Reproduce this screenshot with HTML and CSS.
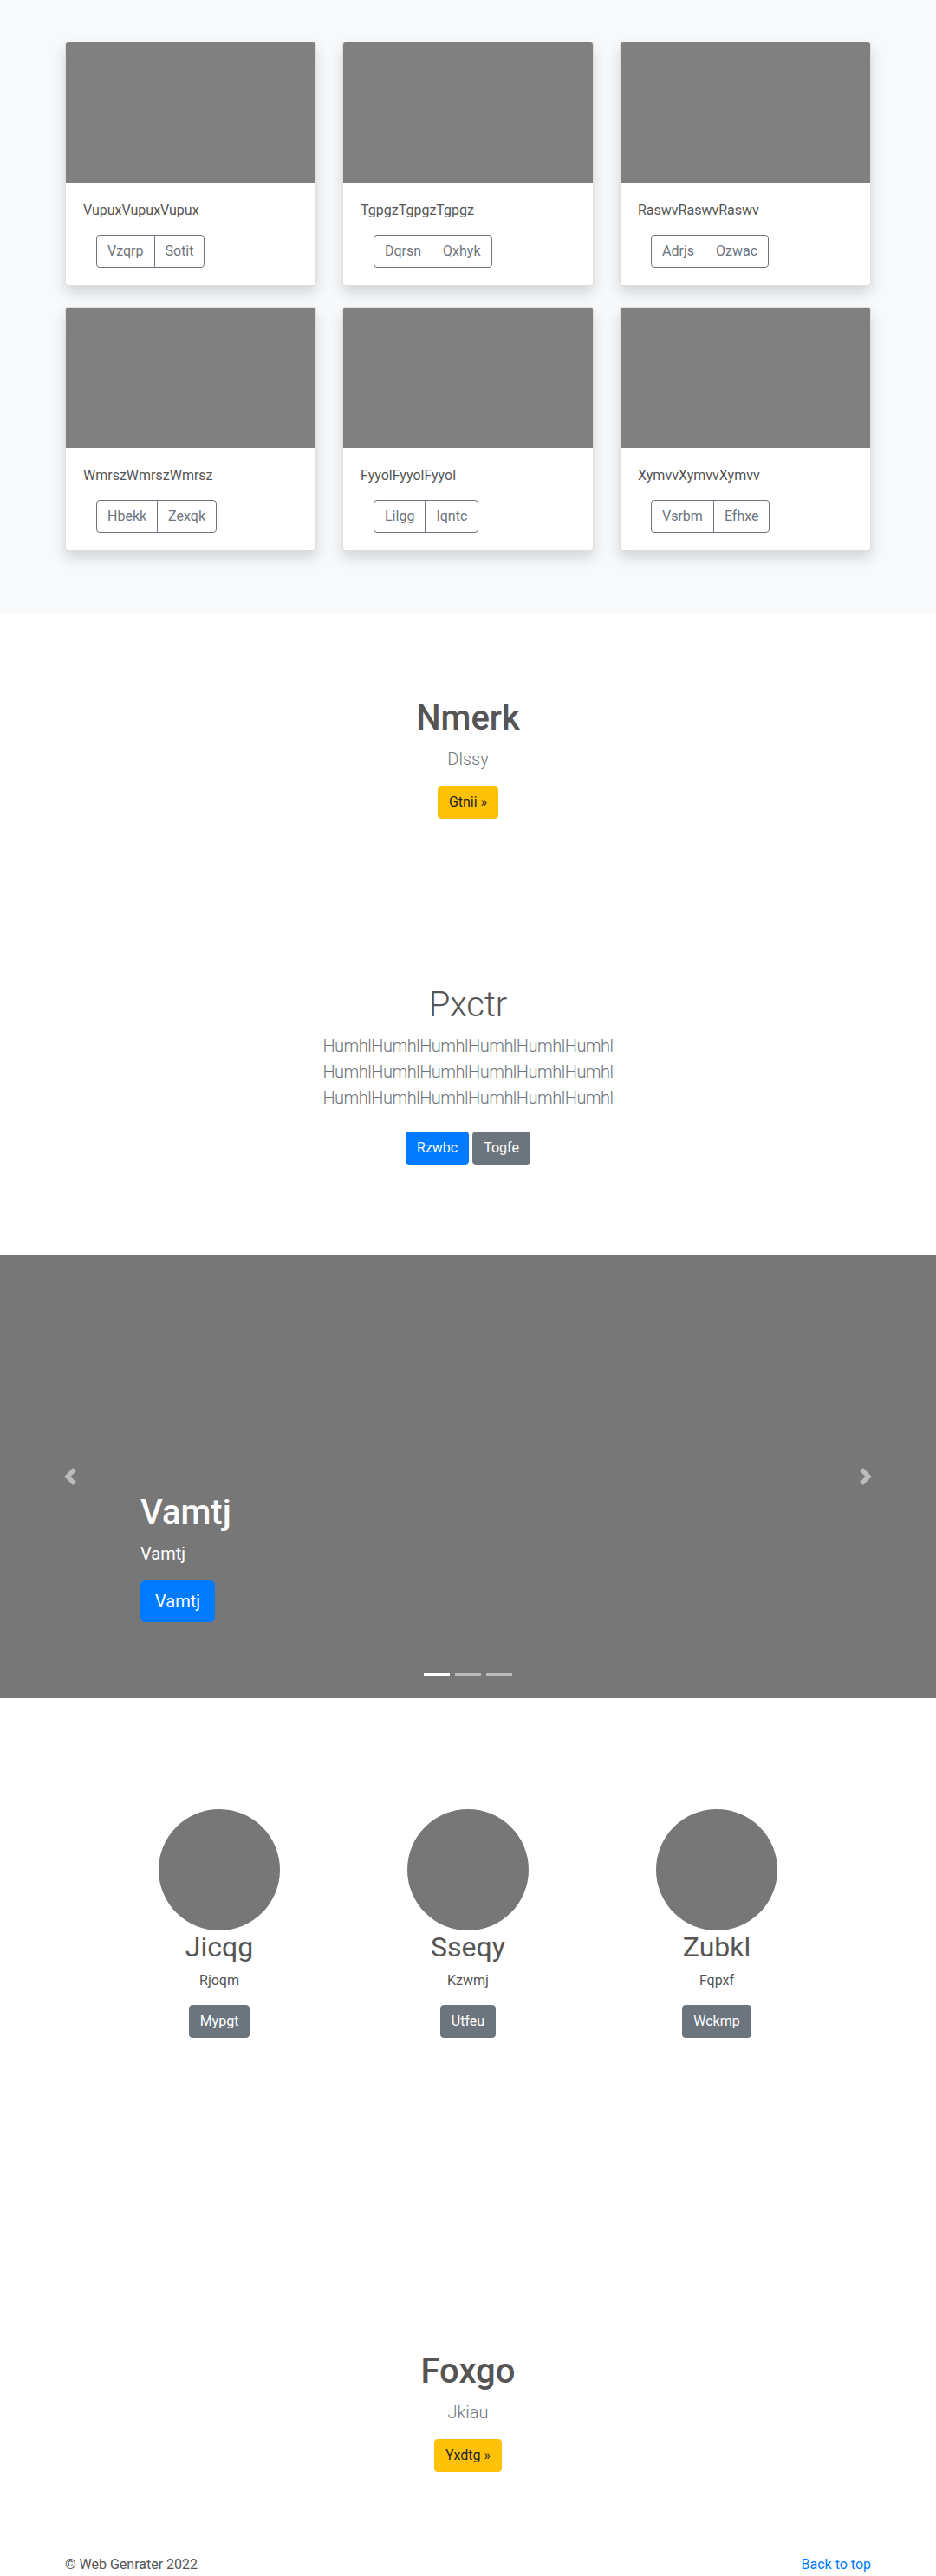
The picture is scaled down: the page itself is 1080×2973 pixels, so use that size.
FILE: index.html
```html
<!DOCTYPE html>
<html lang="en">
<head>
<meta charset="utf-8">
<title>Web Genrater</title>
<link rel="stylesheet" href="styles.css">
</head>
<body>
<section class="album">
  <div class="container">
    <div class="card-grid">
      <div class="card">
        <div class="card-img"></div>
        <div class="card-body">
          <p class="card-text">VupuxVupuxVupux</p>
          <div class="card-actions"><div class="btn-group"><a class="btn btn-outline" href="#">Vzqrp</a><a class="btn btn-outline" href="#">Sotit</a></div></div>
        </div>
      </div>
      <div class="card">
        <div class="card-img"></div>
        <div class="card-body">
          <p class="card-text">TgpgzTgpgzTgpgz</p>
          <div class="card-actions"><div class="btn-group"><a class="btn btn-outline" href="#">Dqrsn</a><a class="btn btn-outline" href="#">Qxhyk</a></div></div>
        </div>
      </div>
      <div class="card">
        <div class="card-img"></div>
        <div class="card-body">
          <p class="card-text">RaswvRaswvRaswv</p>
          <div class="card-actions"><div class="btn-group"><a class="btn btn-outline" href="#">Adrjs</a><a class="btn btn-outline" href="#">Ozwac</a></div></div>
        </div>
      </div>
      <div class="card">
        <div class="card-img"></div>
        <div class="card-body">
          <p class="card-text">WmrszWmrszWmrsz</p>
          <div class="card-actions"><div class="btn-group"><a class="btn btn-outline" href="#">Hbekk</a><a class="btn btn-outline" href="#">Zexqk</a></div></div>
        </div>
      </div>
      <div class="card">
        <div class="card-img"></div>
        <div class="card-body">
          <p class="card-text">FyyolFyyolFyyol</p>
          <div class="card-actions"><div class="btn-group"><a class="btn btn-outline" href="#">Lilgg</a><a class="btn btn-outline" href="#">Iqntc</a></div></div>
        </div>
      </div>
      <div class="card">
        <div class="card-img"></div>
        <div class="card-body">
          <p class="card-text">XymvvXymvvXymvv</p>
          <div class="card-actions"><div class="btn-group"><a class="btn btn-outline" href="#">Vsrbm</a><a class="btn btn-outline" href="#">Efhxe</a></div></div>
        </div>
      </div>
    </div>
  </div>
</section>

<section class="hero hero-top">
  <div class="container">
    <h1 class="hero-title">Nmerk</h1>
    <p class="lead">Dlssy</p>
    <p class="actions"><a class="btn btn-warning" href="#">Gtnii »</a></p>
  </div>
</section>

<section class="jumbotron">
  <div class="container">
    <h1 class="jumbo-title">Pxctr</h1>
    <p class="lead jumbo-lead">HumhlHumhlHumhlHumhlHumhlHumhl HumhlHumhlHumhlHumhlHumhlHumhl HumhlHumhlHumhlHumhlHumhlHumhl</p>
    <p class="actions jumbo-actions"><a class="btn btn-primary" href="#">Rzwbc</a><a class="btn btn-secondary" href="#">Togfe</a></p>
  </div>
</section>

<div class="carousel">
  <ol class="indicators">
    <li class="active"></li>
    <li></li>
    <li></li>
  </ol>
  <a class="control control-prev" href="#">
    <svg width="20" height="20" viewBox="0 0 8 8" fill="#fff"><path d="M5.25 0l-4 4 4 4 1.5-1.5L4.25 4l2.5-2.5L5.25 0z"/></svg>
  </a>
  <a class="control control-next" href="#">
    <svg width="20" height="20" viewBox="0 0 8 8" fill="#fff"><path d="M2.75 0l-1.5 1.5L3.75 4l-2.5 2.5L2.75 8l4-4-4-4z"/></svg>
  </a>
  <div class="caption">
    <h1 class="caption-title">Vamtj</h1>
    <p class="caption-lead">Vamtj</p>
    <p class="caption-actions"><a class="btn btn-lg btn-primary" href="#">Vamtj</a></p>
  </div>
</div>

<section class="marketing">
  <div class="marketing-grid">
    <div class="feature">
      <div class="circle"></div>
      <h2 class="feature-title">Jicqg</h2>
      <p class="feature-text">Rjoqm</p>
      <p class="actions"><a class="btn btn-secondary" href="#">Mypgt</a></p>
    </div>
    <div class="feature">
      <div class="circle"></div>
      <h2 class="feature-title">Sseqy</h2>
      <p class="feature-text">Kzwmj</p>
      <p class="actions"><a class="btn btn-secondary" href="#">Utfeu</a></p>
    </div>
    <div class="feature">
      <div class="circle"></div>
      <h2 class="feature-title">Zubkl</h2>
      <p class="feature-text">Fqpxf</p>
      <p class="actions"><a class="btn btn-secondary" href="#">Wckmp</a></p>
    </div>
  </div>
</section>

<hr class="divider">

<section class="hero hero-bottom">
  <div class="container">
    <h1 class="hero-title">Foxgo</h1>
    <p class="lead">Jkiau</p>
    <p class="actions"><a class="btn btn-warning" href="#">Yxdtg »</a></p>
  </div>
</section>

<footer class="container footer">
  <p>© Web Genrater 2022</p>
  <p><a class="link" href="#">Back to top</a></p>
</footer>
</body>
</html>
```

FILE: styles.css
```css
* { box-sizing: border-box; }

body {
  margin: 0;
  font-family: Roboto, "Segoe UI", "Liberation Sans", sans-serif;
  font-size: 16px;
  line-height: 1.5;
  color: #555;
  background: #fff;
}

h1, h2, p { margin: 0; }

.container {
  width: 960px;
  margin: 0 auto;
  padding: 0 15px;
}

/* Buttons */
.btn {
  display: inline-block;
  font-size: 16px;
  line-height: 24px;
  font-weight: 400;
  padding: 6px 12px;
  border: 1px solid transparent;
  border-radius: 4px;
  text-decoration: none;
  white-space: nowrap;
}
.btn-outline { color: #6c757d; border-color: #6c757d; background: transparent; }
.btn-warning { color: #212529; background: #ffc107; border-color: #ffc107; }
.btn-primary { color: #fff; background: #007bff; border-color: #007bff; }
.btn-secondary { color: #fff; background: #6c757d; border-color: #6c757d; }
.btn-lg { font-size: 20px; line-height: 30px; padding: 8px 16px; border-radius: 5px; }

.btn-group { display: inline-flex; }
.btn-group .btn:first-child { border-top-right-radius: 0; border-bottom-right-radius: 0; }
.btn-group .btn + .btn { margin-left: -1px; border-top-left-radius: 0; border-bottom-left-radius: 0; }

/* Album */
.album {
  background: #f8f9fa;
  padding: 48px 0 72px;
}
.card-grid {
  display: grid;
  grid-template-columns: repeat(3, 1fr);
  gap: 24px 30px;
}
.card {
  background: #fff;
  border: 1px solid rgba(0, 0, 0, .125);
  border-radius: 4px;
  box-shadow: 0 8px 16px rgba(0, 0, 0, .15);
  overflow: hidden;
}
.card-img {
  height: 162px;
  background: #808080;
}
.card-body { padding: 20px; }
.card-text { margin-bottom: 16px; }
.card-actions { display: flex; padding-left: 15px; }

/* Hero sections */
.hero { text-align: center; }
.hero-top { padding: 97px 0 143px; }
.hero-bottom { padding: 178px 0 95px; }
.hero-title {
  font-size: 40px;
  line-height: 1.2;
  font-weight: 500;
  margin-bottom: 8px;
  color: #555;
}
.lead {
  font-size: 20px;
  line-height: 30px;
  font-weight: 300;
  color: #6c757d;
  margin-bottom: 16px;
}
.actions { display: flex; justify-content: center; gap: 4px; }

/* Jumbotron */
.jumbotron {
  text-align: center;
  padding: 48px 0 96px;
}
.jumbo-title {
  font-size: 40px;
  line-height: 1.2;
  font-weight: 300;
  margin-bottom: 8px;
  color: #555;
}
.jumbo-lead {
  max-width: 420px;
  margin: 0 auto 16px;
  letter-spacing: -0.5px;
}
.jumbo-actions { padding: 8px 0; }

/* Carousel */
.carousel {
  position: relative;
  height: 512px;
  background: #777;
  overflow: hidden;
}
.caption {
  position: absolute;
  left: 15%;
  right: 15%;
  bottom: 48px;
  padding: 20px 0;
  color: #fff;
  text-align: left;
  z-index: 10;
}
.caption-title {
  font-size: 40px;
  line-height: 1.2;
  font-weight: 500;
  margin-bottom: 8px;
}
.caption-lead {
  font-size: 20px;
  line-height: 30px;
  margin-bottom: 16px;
}
.caption-actions { display: flex; margin-bottom: 20px; }

.control {
  position: absolute;
  top: 0;
  bottom: 0;
  width: 15%;
  display: flex;
  align-items: center;
  justify-content: center;
  opacity: .5;
  z-index: 5;
}
.control-prev { left: 0; }
.control-next { right: 0; }

.indicators {
  position: absolute;
  left: 0;
  right: 0;
  bottom: 0;
  margin: 0 0 16px;
  padding: 0;
  list-style: none;
  display: flex;
  justify-content: center;
  z-index: 15;
}
.indicators li {
  box-sizing: content-box;
  width: 30px;
  height: 3px;
  margin: 0 3px;
  border-top: 10px solid transparent;
  border-bottom: 10px solid transparent;
  background: #fff;
  background-clip: padding-box;
  opacity: .5;
}
.indicators li.active { opacity: 1; }

/* Marketing */
.marketing { padding: 128px 0 182px; }
.marketing-grid {
  width: 861px;
  margin: 0 auto;
  display: grid;
  grid-template-columns: repeat(3, 1fr);
}
.feature { text-align: center; }
.circle {
  width: 140px;
  height: 140px;
  border-radius: 50%;
  background: #777;
  margin: 0 auto;
}
.feature-title {
  font-size: 32px;
  line-height: 1.2;
  font-weight: 400;
  color: #555;
  margin-bottom: 8px;
}
.feature-text { margin-bottom: 16px; color: #555; }

.divider {
  margin: 0;
  border: 0;
  border-top: 1px solid rgba(0, 0, 0, .1);
}

/* Footer */
.footer {
  display: flex;
  justify-content: space-between;
}
.link { color: #007bff; text-decoration: none; }
```
